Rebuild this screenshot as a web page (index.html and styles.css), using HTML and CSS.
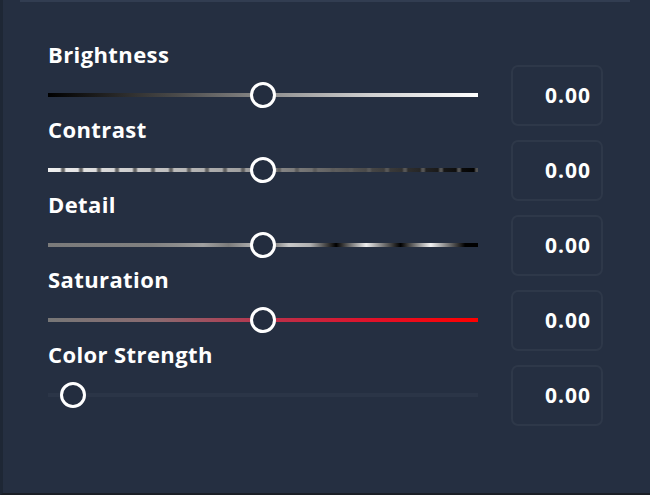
FILE: index.html
```html
<!DOCTYPE html>
<html>
<head>
<meta charset="utf-8">
<link rel="stylesheet" href="styles.css">
</head>
<body>
<div class="app">
  <div class="topbar"></div>
  <div class="rows">
    <div class="row">
      <div class="ctl">
        <div class="label">Brightness</div>
        <div class="slider">
          <div class="track t-bright"></div>
          <div class="thumb" style="left: calc(50% - 13px)"></div>
        </div>
      </div>
      <div class="value">0.00</div>
    </div>
    <div class="row">
      <div class="ctl">
        <div class="label">Contrast</div>
        <div class="slider">
          <div class="track t-contrast"></div>
          <div class="thumb" style="left: calc(50% - 13px)"></div>
        </div>
      </div>
      <div class="value">0.00</div>
    </div>
    <div class="row">
      <div class="ctl">
        <div class="label">Detail</div>
        <div class="slider">
          <div class="track t-detail"></div>
          <div class="thumb" style="left: calc(50% - 13px)"></div>
        </div>
      </div>
      <div class="value">0.00</div>
    </div>
    <div class="row">
      <div class="ctl">
        <div class="label">Saturation</div>
        <div class="slider">
          <div class="track t-sat"></div>
          <div class="thumb" style="left: calc(50% - 13px)"></div>
        </div>
      </div>
      <div class="value">0.00</div>
    </div>
    <div class="row">
      <div class="ctl">
        <div class="label">Color Strength</div>
        <div class="slider">
          <div class="track t-strength"></div>
          <div class="thumb" style="left: 12px"></div>
        </div>
      </div>
      <div class="value">0.00</div>
    </div>
  </div>
</div>
</body>
</html>
```
FILE: styles.css
```css
html, body {
  margin: 0;
  padding: 0;
  background: #252f41;
}
.app {
  width: 650px;
  height: 495px;
  box-sizing: border-box;
  border-left: 3px solid #1e2735;
  border-bottom: 2px solid #1b1f26;
  background: #252f41;
  font-family: "Open Sans", "Liberation Sans", sans-serif;
  color: #ffffff;
}
.topbar {
  height: 2px;
  margin: 0 20px 0 17px;
  background: #323d51;
}
.rows {
  padding: 40px 0 0 45px;
}
.row {
  display: flex;
  align-items: flex-start;
  height: 75px;
}
.ctl {
  width: 430px;
}
.label {
  font-size: 22px;
  font-weight: 700;
  letter-spacing: 0.4px;
  line-height: 24px;
  height: 24px;
}
.slider {
  position: relative;
  height: 26px;
  margin-top: 16px;
  display: flex;
  align-items: center;
}
.track {
  width: 100%;
  height: 4px;
}
.t-bright {
  background: linear-gradient(90deg, #000 0%, #4a4a4a 30%, #8a8a8a 50%, #d0d0d0 75%, #fff 100%);
}
.t-contrast {
  background:
    repeating-linear-gradient(90deg, rgba(80,80,80,0) 0 12px, rgba(90,90,90,0.9) 14px 16px, rgba(80,80,80,0) 18px),
    linear-gradient(90deg, #f0f0f0 0%, #a0a0a0 45%, #555 70%, #000 100%);
}
.t-detail {
  background: linear-gradient(90deg,
    #7a7a7a 0%, #808080 24%, #8c8c8c 30%, #a0a0a0 36%, #7a7a7a 42%,
    #a8a8a8 47%, #5a5a5a 51%, #c8c8c8 56%, #b0b0b0 61%, #000 67%,
    #eeeeee 74%, #000 82%, #f2f2f2 89%, #000 97%, #000 100%);
}
.t-sat {
  background: linear-gradient(90deg, #777 0%, #8a6b70 25%, #b8334c 50%, #e0122a 75%, #ff0000 100%);
}
.t-strength {
  background: #2b3547;
}
.thumb {
  position: absolute;
  top: 0;
  width: 26px;
  height: 26px;
  box-sizing: border-box;
  border: 3.5px solid #ffffff;
  border-radius: 50%;
  background: #232d3f;
}
.value {
  margin: 23px 0 0 33px;
  width: 92px;
  height: 61px;
  box-sizing: border-box;
  border: 2px solid #2e3849;
  border-radius: 7px;
  display: flex;
  align-items: center;
  justify-content: flex-end;
  padding: 0 10px 2px 0;
  font-size: 21px;
  font-weight: 700;
  letter-spacing: 1px;
}
```
